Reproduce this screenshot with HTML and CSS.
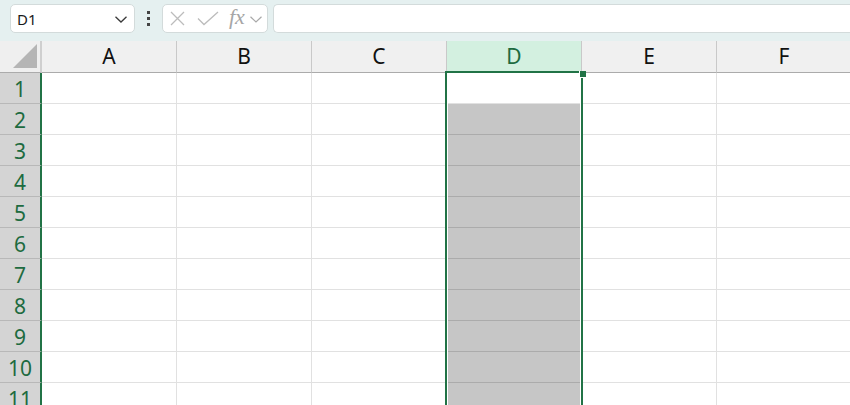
FILE: index.html
```html
<!DOCTYPE html>
<html>
<head>
<meta charset="utf-8">
<link rel="stylesheet" href="styles.css">
</head>
<body>
<div class="topbar">
  <div class="namebox">
    <span class="nb-text">D1</span>
    <svg class="nb-chev" width="12" height="7" viewBox="0 0 12 7"><polyline points="0.5,0.8 6,6 11.5,0.8" fill="none" stroke="#3a3a3a" stroke-width="1.3"/></svg>
  </div>
  <div class="dots"><i></i><i></i><i></i></div>
  <div class="fbtns">
    <svg class="ic-x" width="15" height="15" viewBox="0 0 15 15"><path d="M1 1 L14 14 M14 1 L1 14" stroke="#bcbcbc" stroke-width="1.3" fill="none"/></svg>
    <svg class="ic-check" width="22" height="15" viewBox="0 0 22 15"><polyline points="1,7.5 7,13.5 21,1" fill="none" stroke="#bcbcbc" stroke-width="1.3"/></svg>
    <span class="fx">fx</span>
    <svg class="ic-chev2" width="12" height="7" viewBox="0 0 12 7"><polyline points="0.5,0.8 6,6 11.5,0.8" fill="none" stroke="#a8a8a8" stroke-width="1.2"/></svg>
  </div>
  <div class="finput"></div>
</div>
<div class="sheet">
  <div class="grid">
    <div class="corner"><svg width="26" height="26" viewBox="0 0 26 26"><polygon points="25,1 25,25 1,25" fill="#b5b5b5"/></svg></div>
    <div class="ch">A</div><div class="ch">B</div><div class="ch">C</div><div class="ch ch-sel">D</div><div class="ch">E</div><div class="ch">F</div>

    <div class="rh">1</div><div class="c"></div><div class="c"></div><div class="c"></div><div class="c"></div><div class="c"></div><div class="c"></div>
    <div class="rh">2</div><div class="c"></div><div class="c"></div><div class="c"></div><div class="c g"></div><div class="c"></div><div class="c"></div>
    <div class="rh">3</div><div class="c"></div><div class="c"></div><div class="c"></div><div class="c g"></div><div class="c"></div><div class="c"></div>
    <div class="rh">4</div><div class="c"></div><div class="c"></div><div class="c"></div><div class="c g"></div><div class="c"></div><div class="c"></div>
    <div class="rh">5</div><div class="c"></div><div class="c"></div><div class="c"></div><div class="c g"></div><div class="c"></div><div class="c"></div>
    <div class="rh">6</div><div class="c"></div><div class="c"></div><div class="c"></div><div class="c g"></div><div class="c"></div><div class="c"></div>
    <div class="rh">7</div><div class="c"></div><div class="c"></div><div class="c"></div><div class="c g"></div><div class="c"></div><div class="c"></div>
    <div class="rh">8</div><div class="c"></div><div class="c"></div><div class="c"></div><div class="c g"></div><div class="c"></div><div class="c"></div>
    <div class="rh">9</div><div class="c"></div><div class="c"></div><div class="c"></div><div class="c g"></div><div class="c"></div><div class="c"></div>
    <div class="rh">10</div><div class="c"></div><div class="c"></div><div class="c"></div><div class="c g"></div><div class="c"></div><div class="c"></div>
    <div class="rh">11</div><div class="c"></div><div class="c"></div><div class="c"></div><div class="c g"></div><div class="c"></div><div class="c"></div>
  </div>
  <div class="selection"><div class="handle"></div></div>
</div>
</body>
</html>
```

FILE: styles.css
```css
* { box-sizing: border-box; }
html, body {
  margin: 0;
  padding: 0;
  width: 850px;
  height: 405px;
  overflow: hidden;
  background: #fff;
  font-family: "Segoe UI", "Noto Sans", "Open Sans", sans-serif;
}
.topbar {
  height: 41px;
  background: #e5f0f0;
  display: flex;
  align-items: flex-start;
  padding: 4px 0 0 10px;
}
.namebox {
  width: 125px;
  height: 29px;
  background: #fff;
  border: 1px solid #d3dbdb;
  border-radius: 5px;
  display: flex;
  align-items: center;
  padding: 0 7px 0 6px;
}
.nb-text {
  font-size: 15px;
  color: #1a1a1a;
  flex: 1;
  padding-top: 1px;
}
.nb-chev { display: block; margin-top: 2px; }
.dots {
  width: 27px;
  height: 29px;
  display: flex;
  flex-direction: column;
  align-items: center;
  justify-content: center;
  gap: 3px;
}
.dots i {
  display: block;
  width: 3px;
  height: 3px;
  background: #444;
}
.fbtns {
  width: 106px;
  height: 29px;
  background: #fff;
  border: 1px solid #d3dbdb;
  border-radius: 5px;
  display: flex;
  align-items: center;
  padding-left: 7px;
}
.ic-x { display: block; }
.ic-check { display: block; margin-left: 12px; }
.fx {
  font-family: "Liberation Serif", "DejaVu Serif", serif;
  font-style: italic;
  font-size: 22px;
  color: #a6a6a6;
  margin-left: 10px;
  line-height: 1;
  margin-top: -3px;
}
.ic-chev2 { display: block; margin-left: 5px; margin-top: 1px; }
.finput {
  margin-left: 5px;
  flex: 1;
  height: 29px;
  background: #fff;
  border: 1px solid #d3dbdb;
  border-right: none;
  border-radius: 5px 0 0 5px;
}
.sheet {
  position: relative;
}
.grid {
  display: grid;
  grid-template-columns: 42px repeat(6, 135px);
  grid-template-rows: 32px repeat(11, 31px);
}
.corner {
  background: #efefef;
  border-right: 2px solid #cfcfcf;
  border-bottom: 1px solid #ababab;
  display: flex;
  align-items: flex-end;
  justify-content: flex-end;
  padding: 0 2px 3px 0;
}
.corner svg { display: block; }
.ch {
  background: #f0f0f0;
  border-right: 1px solid #c9c9c9;
  border-bottom: 1px solid #ababab;
  display: flex;
  align-items: center;
  justify-content: center;
  font-size: 21px;
  color: #111;
  padding-bottom: 1px;
}
.ch-sel {
  background: #d3f0e0;
  color: #1d6b40;
}
.rh {
  background: #d4d4d4;
  border-right: 2px solid #217346;
  border-bottom: 1px solid #b8b8b8;
  display: flex;
  align-items: center;
  justify-content: center;
  font-size: 21px;
  color: #1d6b40;
  padding-top: 1px;
}
.c {
  border-right: 1px solid #e1e1e1;
  border-bottom: 1px solid #e1e1e1;
}
.c.g {
  background: #c6c6c6;
  border-bottom-color: #ababab;
}
.selection {
  position: absolute;
  left: 445px;
  top: 30px;
  width: 138px;
  height: 420px;
  border: 2px solid #217346;
  box-shadow: inset 0 0 0 1px #fff;
  pointer-events: none;
}
.handle {
  position: absolute;
  left: 132px;
  top: -2px;
  width: 7px;
  height: 7px;
  background: #217346;
  border-bottom: 1px solid #fff;
  border-left: 1px solid #fff;
}
```
